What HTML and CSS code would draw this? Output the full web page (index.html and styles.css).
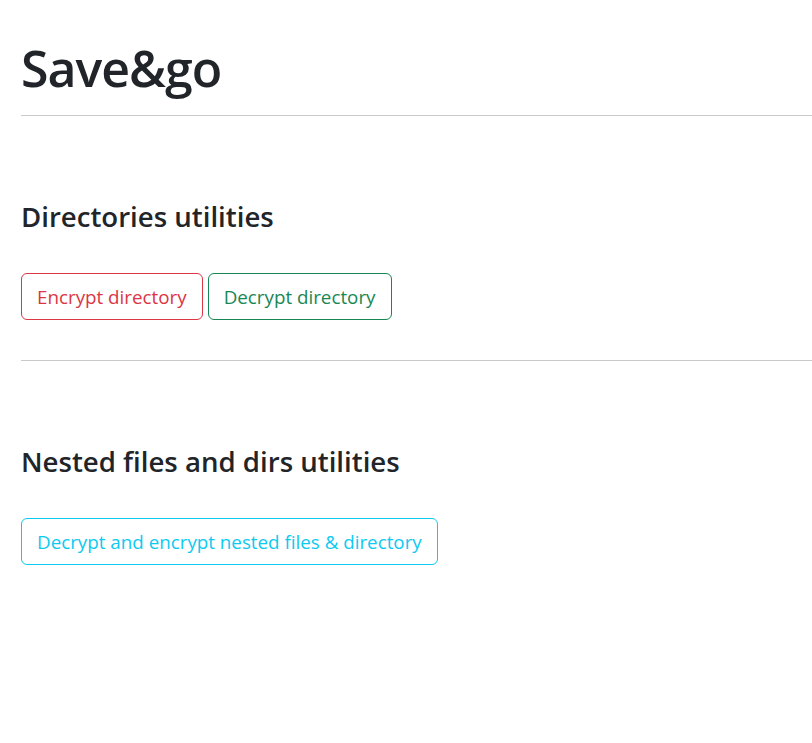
FILE: index.html
```html
<!DOCTYPE html>
<html lang="en">
<head>
<meta charset="utf-8">
<title>Save&amp;go</title>
<link rel="stylesheet" href="styles.css">
</head>
<body>
<main class="page">
  <h1 class="title">Save&amp;go</h1>
  <hr class="rule">
  <section class="section">
    <h2 class="section-title">Directories utilities</h2>
    <div class="actions">
      <button class="btn btn-danger">Encrypt directory</button>
      <button class="btn btn-success">Decrypt directory</button>
    </div>
  </section>
  <hr class="rule">
  <section class="section">
    <h2 class="section-title">Nested files and dirs utilities</h2>
    <div class="actions">
      <button class="btn btn-info">Decrypt and encrypt nested files &amp; directory</button>
    </div>
  </section>
</main>
</body>
</html>
```
FILE: styles.css
```css
html, body {
  margin: 0;
  padding: 0;
  background: #fff;
}
body {
  font-family: "Open Sans", "Noto Sans", sans-serif;
  color: #212529;
}
.page {
  padding: 38px 0 0 21px;
}
.title {
  margin: 0;
  font-size: 50px;
  font-weight: 600;
  line-height: 1.2;
  letter-spacing: -1px;
}
.rule {
  margin: 17px 0 0 0;
  border: 0;
  border-top: 1px solid #c9cacb;
}
.section {
  padding-top: 84px;
}
.section-title {
  margin: 0;
  font-size: 27.6px;
  font-weight: 600;
  line-height: 1.2;
}
.actions {
  display: flex;
  gap: 5px;
  margin-top: 40px;
  margin-bottom: 40px;
}
.btn {
  font-family: inherit;
  font-size: 18.8px;
  line-height: 27px;
  padding: 10px 15px 8px;
  background: transparent;
  border: 1px solid;
  border-radius: 6px;
}
.btn-danger { color: #dc3545; border-color: #dc3545; }
.btn-success { color: #198754; border-color: #198754; }
.btn-info { color: #0dcaf0; border-color: #0dcaf0; }
```
